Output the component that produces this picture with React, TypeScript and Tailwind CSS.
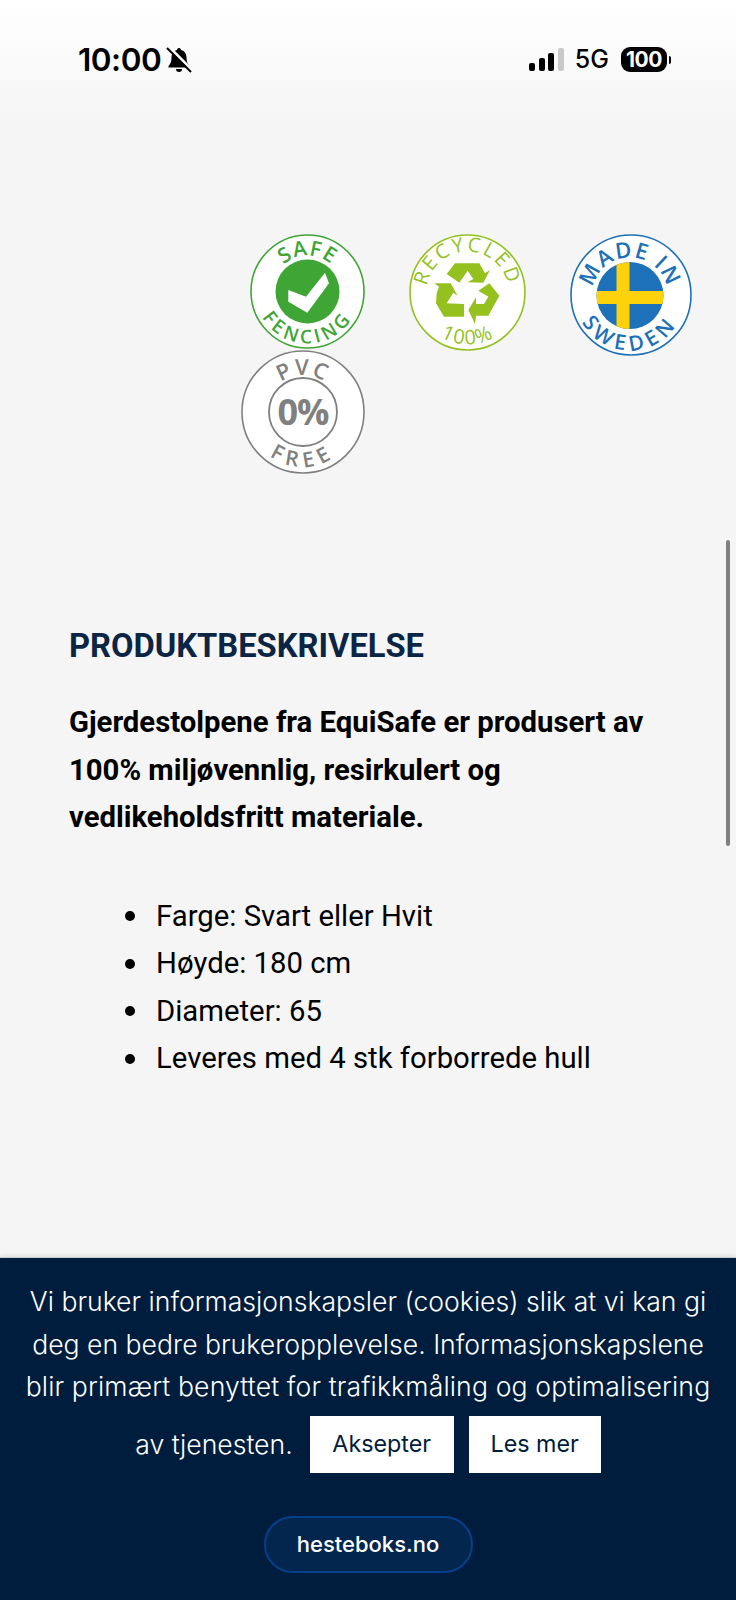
function Ring({ size, color, children }: { size: number; color: string; children: React.ReactNode }) {
  const c = size / 2;
  return (
    <svg width={size} height={size} viewBox={`0 0 ${size} ${size}`} className="block shrink-0">
      <circle cx={c} cy={c} r={c - 1} fill="#fff" stroke={color} strokeWidth="1.6" />
      {children}
    </svg>
  );
}

function SafeLogo() {
  return (
    <Ring size={115} color="#3fa535">
      <defs>
        <path id="safeTop" d="M 21.500 57.500 A 36 36 0 0 1 93.500 57.500" />
        <path id="safeBottom" d="M 5.500 57.500 A 52 52 0 0 0 109.500 57.500" />
      </defs>
      <circle cx="57.500" cy="57.500" r="32" fill="#3fa535" />
      <polygon points="38.300,56 38.300,67.700 57.300,78.700 79,49.300 75,38.700 56,62.700" fill="#fff" />
      <text fill="#3fa535" fontSize="21" fontWeight="600" letterSpacing="1" textAnchor="middle" fontFamily="Open Sans, sans-serif">
        <textPath href="#safeTop" startOffset="50%">SAFE</textPath>
      </text>
      <text fill="#3fa535" fontSize="19" fontWeight="600" letterSpacing="4" textAnchor="middle" fontFamily="Open Sans, sans-serif">
        <textPath href="#safeBottom" startOffset="50%">FENCING</textPath>
      </text>
    </Ring>
  );
}

function RecycledLogo() {
  return (
    <Ring size={117} color="#95c11f">
      <defs>
        <path id="recTop" d="M 20 72.500 A 41 41 0 1 1 97 72.500" />
        <path id="recBottom" d="M 6.500 58.500 A 52 52 0 0 0 110.500 58.500" />
      </defs>
      <g fill="#95c11f" transform="translate(11 16) scale(0.3333)">
        <polygon points="80,72 105,40 178,40 195,70 210,60 190,98 143,97 160,87 143,62 118,98" />
        <polygon points="43,100 92,100 113,138 100,128 80,160 132,162 132,200 72,200 48,160 50,130 57,110" />
        <polygon points="175,122 208,100 238,137 205,197 168,197 165,222 145,180 168,142 168,162 192,162 205,140" />
      </g>
      <text fill="#95c11f" fontSize="20" fontWeight="500" letterSpacing="2.500" textAnchor="middle" fontFamily="Open Sans, sans-serif">
        <textPath href="#recTop" startOffset="50%">RECYCLED</textPath>
      </text>
      <text fill="#95c11f" fontSize="20" letterSpacing="1.500" textAnchor="middle" fontFamily="Open Sans, sans-serif">
        <textPath href="#recBottom" startOffset="50%">100%</textPath>
      </text>
    </Ring>
  );
}

function SwedenLogo() {
  return (
    <Ring size={122} color="#1d71b8">
      <defs>
        <clipPath id="flagClip">
          <circle cx="60" cy="61.500" r="33.500" />
        </clipPath>
        <path id="sweTop" d="M 22 61.500 A 38 38 0 0 1 98 61.500" />
        <path id="sweBottom" d="M 5 61.500 A 55 55 0 0 0 115 61.500" />
      </defs>
      <g clipPath="url(#flagClip)">
        <rect x="20" y="20" width="84" height="84" fill="#1d71b8" />
        <rect x="46.500" y="20" width="13" height="84" fill="#fdd20a" />
        <rect x="20" y="57" width="84" height="13" fill="#fdd20a" />
      </g>
      <text fill="#1d71b8" fontSize="22" fontWeight="600" letterSpacing="1.500" textAnchor="middle" fontFamily="Open Sans, sans-serif">
        <textPath href="#sweTop" startOffset="50%">MADE IN</textPath>
      </text>
      <text fill="#1d71b8" fontSize="21" fontWeight="600" letterSpacing="5" textAnchor="middle" fontFamily="Open Sans, sans-serif">
        <textPath href="#sweBottom" startOffset="50%">SWEDEN</textPath>
      </text>
    </Ring>
  );
}

function PvcLogo() {
  return (
    <Ring size={124} color="#808080">
      <defs>
        <path id="pvcTop" d="M 25 62 A 37 37 0 0 1 99 62" />
        <path id="pvcBottom" d="M 7 62 A 55 55 0 0 0 117 62" />
      </defs>
      <circle cx="62" cy="62" r="34" fill="none" stroke="#808080" strokeWidth="1.800" />
      <text x="62" y="75" fill="#808080" fontSize="36" fontWeight="700" textAnchor="middle" fontFamily="Open Sans, sans-serif" letterSpacing="-1">
        0%
      </text>
      <text fill="#808080" fontSize="22" fontWeight="600" letterSpacing="2" textAnchor="middle" fontFamily="Open Sans, sans-serif">
        <textPath href="#pvcTop" startOffset="50%">PVC</textPath>
      </text>
      <text fill="#808080" fontSize="21" fontWeight="600" letterSpacing="6" textAnchor="middle" fontFamily="Open Sans, sans-serif">
        <textPath href="#pvcBottom" startOffset="50%">FREE</textPath>
      </text>
    </Ring>
  );
}

function StatusBar() {
  return (
    <div className="flex items-center justify-between h-[25px] pl-[78px] pr-[65px] font-['Inter',sans-serif] text-black">
      <div className="flex items-center gap-[5px]">
        <span className="text-[31.500px] leading-none font-semibold tracking-[-0.5px]">10:00</span>
        <svg width="26" height="26" viewBox="0 0 26 26">
          <path d="M13 1c1.400 0 2 1 2 2 4 1 5.500 4 5.500 8 0 3 1 6 3 8v1.500h-21V19c2-2 3-5 3-8 0-4 1.500-7 5.500-8 0-1 .6-2 2-2z" />
          <path d="M10 22h6a3 3 0 0 1-6 0z" />
          <path d="M3 0l23 23" stroke="#fbfbfb" strokeWidth="3" />
          <path d="M1 1l24 24" stroke="#000" strokeWidth="2" />
        </svg>
      </div>
      <div className="flex items-center">
        <div className="flex items-end gap-[3.500px] h-[23px]">
          <div className="w-[6px] h-[8px] rounded-[2px] bg-black" />
          <div className="w-[6px] h-[13px] rounded-[2px] bg-black" />
          <div className="w-[6px] h-[18px] rounded-[2px] bg-black" />
          <div className="w-[6px] h-[23px] rounded-[2px] bg-[#c9c9c9]" />
        </div>
        <span className="ml-[11px] text-[25px] leading-none font-medium">5G</span>
        <div className="ml-[12px] w-[46px] h-[25px] rounded-[9px] bg-black text-white text-[21px] leading-[25px] font-bold text-center tracking-[-0.5px]">
          100
        </div>
        <div className="ml-[2px] w-[2px] h-[8px] rounded-r-full bg-black" />
      </div>
    </div>
  );
}

const specs = ["Farge: Svart eller Hvit", "Høyde: 180 cm", "Diameter: 65", "Leveres med 4 stk forborrede hull"];

export default function App() {
  return (
    <div className="relative h-[1600px] overflow-hidden flex flex-col bg-[#f5f5f5] font-['Roboto',sans-serif]">
      <div className="pt-[47px] pb-[51px] bg-gradient-to-b from-white to-[#f5f5f5]">
        <StatusBar />
      </div>

      <div className="mt-[111px] flex gap-[44px] pl-[250px] items-start">
        <SafeLogo />
        <RecycledLogo />
        <SwedenLogo />
      </div>
      <div className="mt-[-6px] pl-[241px]">
        <PvcLogo />
      </div>

      <div className="pl-[69px] pr-[40px]">
        <h2 className="mt-[152px] text-[32.700px] leading-[40px] font-bold text-[#0b2545]">PRODUKTBESKRIVELSE</h2>
        <p className="mt-[33px] text-[29.300px] leading-[47.500px] font-bold text-black">
          Gjerdestolpene fra EquiSafe er produsert av
          <br />
          100% miljøvennlig, resirkulert og
          <br />
          vedlikeholdsfritt materiale.
        </p>
        <ul className="mt-[51px] pl-[56px] text-[29.300px] leading-[47.500px] text-black">
          {specs.map((s) => (
            <li key={s} className="flex items-center gap-[21px]">
              <span className="w-[10px] h-[10px] rounded-full bg-black shrink-0" />
              {s}
            </li>
          ))}
        </ul>
      </div>

      <div className="mt-auto h-[343px] bg-[#001d3d] border-t border-[#c5ccd3] shadow-[0_-2px_4px_rgba(0,0,0,0.08)] font-['Inter',sans-serif] text-white text-center">
        <div className="pt-[22px] text-[26.600px] leading-[42.500px] font-light">
          <p>Vi bruker informasjonskapsler (cookies) slik at vi kan gi</p>
          <p>deg en bedre brukeropplevelse. Informasjonskapslene</p>
          <p className="tracking-[0.14px]">blir primært benyttet for trafikkmåling og optimalisering</p>
          <div className="mt-[8px] flex items-center justify-center">
            <span>av tjenesten.</span>
            <button className="ml-[17px] w-[144px] h-[57px] bg-white text-[#001d3d] text-[23.300px] font-normal">Aksepter</button>
            <button className="ml-[15px] w-[132px] h-[57px] bg-white text-[#001d3d] text-[23.300px] font-normal">Les mer</button>
          </div>
        </div>
        <div className="mt-[43px] flex justify-center">
          <div className="w-[209px] h-[57px] rounded-full bg-[#03264f] border-2 border-[#07408a] text-[22px] leading-[53px] font-medium">
            hesteboks.no
          </div>
        </div>
      </div>

      <div className="absolute left-[726px] top-[540px] w-[4px] h-[306px] rounded-full bg-[#808080]" />
    </div>
  );
}
